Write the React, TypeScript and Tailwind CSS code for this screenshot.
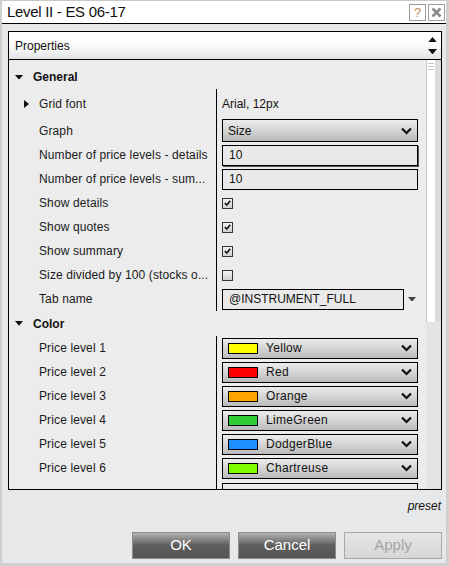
import React from "react";

const FONT = { fontFamily: '"Liberation Sans", Arial, sans-serif' };

function Chevron() {
  return (
    <svg width="11" height="8" viewBox="0 0 11 8" className="shrink-0">
      <path d="M1 1.5 L5.5 6 L10 1.5" stroke="#111" strokeWidth="2.2" fill="none" />
    </svg>
  );
}

function TriDown({ size = 7, color = "#111" }: { size?: number; color?: string }) {
  return (
    <svg width={size} height={size * 0.6} viewBox="0 0 10 6">
      <path d="M0 0 L10 0 L5 6 Z" fill={color} />
    </svg>
  );
}

function Check({ checked }: { checked: boolean }) {
  return (
    <div className="w-[11px] h-[11px] border border-[#333] bg-gradient-to-b from-[#f4f4f4] to-[#d0d0d0] flex items-center justify-center">
      {checked && (
        <svg width="7" height="6" viewBox="0 0 7 6">
          <path d="M0.8 3 L2.8 5 L6.2 0.8" stroke="#111" strokeWidth="1.6" fill="none" />
        </svg>
      )}
    </div>
  );
}

function Dropdown({ children }: { children: React.ReactNode }) {
  return (
    <div className="w-[196px] h-full border border-black bg-gradient-to-b from-[#ececec] via-[#d4d4d4] to-[#b9b9b9] flex items-center pl-[5px] pr-[5px] justify-between">
      <div className="flex items-center gap-[8px] text-[12px] text-[#111]">{children}</div>
      <Chevron />
    </div>
  );
}

type Row = {
  label: string;
  h: number;
  value: React.ReactNode;
  expander?: boolean;
  alignTop?: boolean;
};

function PropRow({ label, h, value, expander, alignTop }: Row) {
  return (
    <div className="flex shrink-0" style={{ height: h }}>
      <div className="w-[207px] flex items-center text-[12px] text-[#1a1a1a] relative tracking-[0.12px]">
        {expander && (
          <svg width="5" height="8" viewBox="0 0 5 8" className="absolute left-[15px]">
            <path d="M0 0 L5 4 L0 8 Z" fill="#111" />
          </svg>
        )}
        <span className="pl-[30px] whitespace-nowrap">{label}</span>
      </div>
      <div className="w-px bg-black" />
      <div className={"flex-1 flex pl-[5px] " + (alignTop ? "items-start pt-[3px]" : "items-center")}>{value}</div>
    </div>
  );
}

function Category({ label, h }: { label: string; h: number }) {
  return (
    <div className="flex items-center shrink-0" style={{ height: h }}>
      <div className="pl-[6px] w-[24px]">
        <TriDown size={8} />
      </div>
      <span className="text-[12px] font-bold text-[#111]">{label}</span>
    </div>
  );
}

const colorRows = [
  ["Price level 1", "Yellow", "#ffff00"],
  ["Price level 2", "Red", "#ff0000"],
  ["Price level 3", "Orange", "#ffa500"],
  ["Price level 4", "LimeGreen", "#32cd32"],
  ["Price level 5", "DodgerBlue", "#1e90ff"],
  ["Price level 6", "Chartreuse", "#7fff00"],
];

export default function App() {
  return (
    <div className="w-[449px] h-[566px] bg-[#e7e8e9] flex flex-col border-l-2 border-r-[3px] border-b-[3px] border-[#cfd0d1]" style={FONT}>
      {/* Title bar */}
      <div className="h-[24px] bg-white border-t border-[#c8c8c8] border-b border-b-black flex items-center justify-between pl-[5px] pr-[1px] shrink-0">
        <span className="text-[15px] text-[#111] tracking-[-0.3px]">Level II - ES 06-17</span>
        <div className="flex gap-[2px]">
          <div className="w-[17px] h-[17px] border border-[#9a9a9a] bg-white flex items-center justify-center text-[13px] text-[#c08a50] leading-none">?</div>
          <div className="w-[17px] h-[17px] border border-[#9a9a9a] bg-white flex items-center justify-center">
            <svg width="11" height="11" viewBox="0 0 11 11">
              <path d="M1.5 1.5 L9.5 9.5 M9.5 1.5 L1.5 9.5" stroke="#8a8a8a" strokeWidth="2.6" />
            </svg>
          </div>
        </div>
      </div>

      {/* Panel */}
      <div className="pt-[7px] pl-[6px]">
        <div className="w-[434px] h-[459px] border border-black flex flex-col bg-[#ececed]">
          <div className="h-[28px] shrink-0 border-b border-black bg-gradient-to-b from-white via-[#fafafa] to-[#e2e3e4] flex items-center justify-between pl-[6px] pr-[4px]">
            <span className="text-[12px] text-[#111]">Properties</span>
            <div className="flex flex-col gap-[7px] items-center">
              <svg width="9" height="5" viewBox="0 0 10 6"><path d="M0 6 L10 6 L5 0 Z" fill="#111" /></svg>
              <TriDown size={9} />
            </div>
          </div>
          <div className="flex flex-1 overflow-hidden">
            <div className="flex-1 pt-[5px] overflow-hidden flex flex-col">
              <Category label="General" h={24} />
              <PropRow label="Grid font" h={29} expander value={<span className="text-[12px] text-[#111]">Arial, 12px</span>} />
              <PropRow
                label="Graph"
                h={25}
                value={
                  <div className="h-[23px]">
                    <Dropdown><span>Size</span></Dropdown>
                  </div>
                }
              />
              <PropRow
                label="Number of price levels - details"
                h={24}
                value={
                  <div className="w-[196px] h-[21px] border border-black bg-[#e9e9e9] shadow-[1px_1px_0_#555] text-[12px] text-[#111] flex items-center pl-[6px]">10</div>
                }
              />
              <PropRow
                label="Number of price levels - sum..."
                h={24}
                value={
                  <div className="w-[196px] h-[21px] border border-black bg-[#e9e9e9] text-[12px] text-[#111] flex items-center pl-[6px]">10</div>
                }
              />
              <PropRow label="Show details" h={24} value={<Check checked />} />
              <PropRow label="Show quotes" h={24} value={<Check checked />} />
              <PropRow label="Show summary" h={24} value={<Check checked />} />
              <PropRow label="Size divided by 100 (stocks o..." h={24} value={<Check checked={false} />} />
              <PropRow
                label="Tab name"
                h={24}
                value={
                  <div className="flex items-center gap-[4px]">
                    <div className="w-[182px] h-[21px] border border-black bg-[#e9e9e9] text-[12px] text-[#111] flex items-center pl-[6px]">@INSTRUMENT_FULL</div>
                    <TriDown size={8} color="#444" />
                  </div>
                }
              />
              <Category label="Color" h={25} />
              {colorRows.map(([label, name, color]) => (
                <PropRow
                  key={label}
                  label={label}
                  h={24}
                  value={
                    <div className="h-[21px]">
                      <Dropdown>
                        <div className="w-[30px] h-[11px] border border-black" style={{ background: color }} />
                        <span className="tracking-[0.3px]">{name}</span>
                      </Dropdown>
                    </div>
                  }
                />
              ))}
              <PropRow
                label=""
                h={24}
                alignTop
                value={<div className="w-[196px] h-[21px] border border-black bg-gradient-to-b from-[#ececec] to-[#d4d4d4]" />}
              />
            </div>
            {/* scrollbar */}
            <div className="w-[15px] shrink-0 bg-[#e3e4e5] flex flex-col">
              <div className="h-[262px] flex">
                <div className="w-[9px] bg-white border-l border-[#c8c8c8] flex flex-col items-center pt-[3px] gap-[2px]">
                  <div className="w-[6px] h-px bg-[#c4c4c4]" />
                  <div className="w-[6px] h-px bg-[#c4c4c4]" />
                  <div className="w-[6px] h-px bg-[#c4c4c4]" />
                </div>
                <div className="w-[6px] bg-[#dcdcdc]" />
              </div>
            </div>
          </div>
        </div>
      </div>

      {/* preset */}
      <div className="flex justify-end pr-[5px] pt-[7px]">
        <span className="text-[12px] italic text-[#111]">preset</span>
      </div>

      {/* Buttons */}
      <div className="flex justify-end gap-[8px] pr-[4px] pt-[17px]">
        <button className="w-[98px] h-[27px] border border-[#8c8c8c] bg-gradient-to-b from-[#b4b4b4] via-[#5e5e5e] to-[#555] text-white text-[15px]">OK</button>
        <button className="w-[98px] h-[27px] border border-[#8c8c8c] bg-gradient-to-b from-[#b4b4b4] via-[#5e5e5e] to-[#555] text-white text-[15px]">Cancel</button>
        <button className="w-[98px] h-[27px] border border-[#a8a8a8] bg-gradient-to-b from-[#e6e6e6] to-[#d6d6d6] text-[#a4a4a4] text-[15px]">Apply</button>
      </div>
    </div>
  );
}
